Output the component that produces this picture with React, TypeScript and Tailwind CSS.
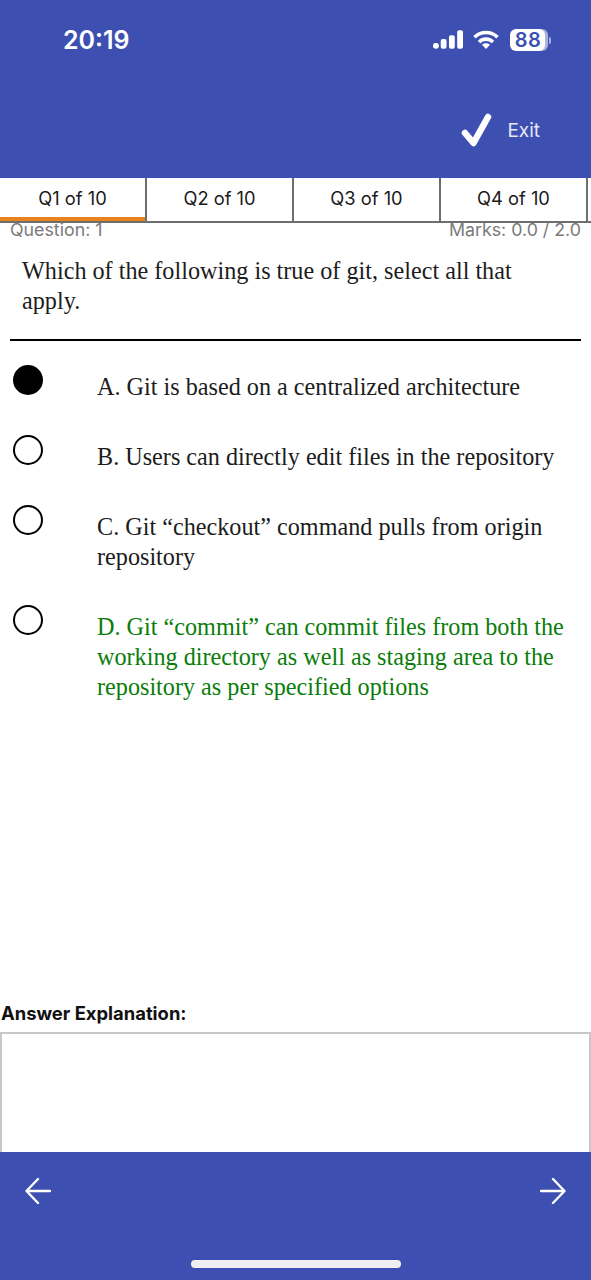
const options = [
  { text: "A. Git is based on a centralized architecture", selected: true, correct: false },
  { text: "B. Users can directly edit files in the repository", selected: false, correct: false },
  { text: "C. Git “checkout” command pulls from origin repository", selected: false, correct: false },
  {
    text: "D. Git “commit” can commit files from both the working directory as well as staging area to the repository as per specified options",
    selected: false,
    correct: true,
  },
]

const tabs = ["Q1 of 10", "Q2 of 10", "Q3 of 10", "Q4 of 10"]

function StatusIcons() {
  return (
    <div className="flex items-center">
      {/* signal */}
      <svg width="30" height="20" viewBox="0 0 31 20" fill="#fff">
        <rect x="0" y="13" width="6" height="6" rx="2.5" />
        <rect x="8" y="9" width="6" height="10" rx="2" />
        <rect x="16.5" y="5" width="6" height="14" rx="2" />
        <rect x="25" y="0" width="6" height="19" rx="2" />
      </svg>
      {/* wifi */}
      <svg className="ml-[10px]" width="26" height="20" viewBox="0 0 26 20" fill="none" stroke="#fff" strokeWidth="3.6">
        <path d="M1.5 7.2C8 1 18 1 24.5 7.2" />
        <path d="M6 12C10 8.2 16 8.2 20 12" />
        <path d="M13 19l-4-4.2c2.3-2 5.700-2 8 0z" fill="#fff" stroke="none" />
      </svg>
      {/* battery */}
      <div className="ml-[11px] flex items-center">
        <div className="relative flex h-[22px] w-[38px] items-center justify-center overflow-hidden rounded-[6px] bg-[#aab2dd]">
          <div className="absolute inset-y-0 left-0 w-[35px] rounded-[6px] bg-white" />
          <span className="relative pr-[2px] text-[20px] leading-none font-semibold tracking-[0.5px] text-[#3d50b2]">88</span>
        </div>
        <div className="ml-[1px] h-[7px] w-[2px] rounded-r-full bg-[#aab2dd]" />
      </div>
    </div>
  )
}

export default function App() {
  return (
    <div className="flex h-[1280px] w-[591px] flex-col overflow-hidden bg-white font-['Inter',sans-serif]">
      {/* header */}
      <header className="h-[178px] bg-[#3d50b2] text-white">
        <div className="flex h-[80px] items-center justify-between pr-[40px] pl-[63px]">
          <span className="text-[25px] leading-none font-semibold">20:19</span>
          <StatusIcons />
        </div>
        <div className="mt-[19px] flex h-[62px] items-center justify-end pr-[51px]">
          <svg width="32" height="34" viewBox="0 0 32 34" fill="none" stroke="#fff" strokeWidth="6.500" strokeLinecap="round" strokeLinejoin="round">
            <path d="M4 20l8.500 10L27 4" />
          </svg>
          <span className="ml-[14px] text-[19px] leading-none text-[#e4e7f6]">Exit</span>
        </div>
      </header>

      {/* question tabs */}
      <div className="flex h-[45px] border-b-2 border-[#6e6e6e] pr-[3px]">
        {tabs.map((tab, i) => (
          <div key={tab} className="relative flex flex-1 items-center justify-center border-r-2 border-[#6e6e6e] pb-[2px] text-[18.3px] text-[#1a1a1a]">
            {tab}
            {i === 0 && <div className="absolute inset-x-0 bottom-0 h-[4px] bg-[#e8831f]" />}
          </div>
        ))}
      </div>

      {/* question meta */}
      <div className="flex h-[14px] items-center justify-between px-[10px] text-[17.8px] leading-none text-[#7a7a7a]">
        <span>Question: 1</span>
        <span>Marks: 0.0 / 2.0</span>
      </div>

      <div className="px-[10px] font-['Liberation_Serif',serif] text-[24.2px] leading-[30px]">
        <p className="mt-[19px] pr-[60px] pl-[12px] text-[#1c1c1c]">
          Which of the following is true of git, select all that apply.
        </p>
        <div className="mt-[23px] h-[2px] bg-black" />
      </div>

      {/* options */}
      <div className="mt-[24px] flex flex-col font-['Liberation_Serif',serif] text-[24.2px] leading-[30px]">
        {options.map((opt) => (
          <div key={opt.text} className="flex items-start pb-[33px] pl-[12.500px]">
            <div className={`h-[30px] w-[30px] shrink-0 rounded-full border-[2.500px] border-black ${opt.selected ? "bg-black" : "bg-white"}`} />
            <p className={`mt-[7px] ml-[54.500px] w-[475px] ${opt.correct ? "text-[#0a7d0a]" : "text-[#1c1c1c]"}`}>{opt.text}</p>
          </div>
        ))}
      </div>

      <div className="flex-1" />

      {/* explanation */}
      <div className="pl-[1px] text-[18.4px] leading-[22px] font-bold text-[#111]">Answer Explanation:</div>
      <div className="mt-[8px] h-[120px] border-2 border-b-0 border-[#c8c8c8] bg-white" />

      {/* footer */}
      <footer className="flex h-[128px] flex-col bg-[#3d50b2]">
        <div className="mt-[25px] flex items-center justify-between px-[25px]">
          <svg width="26" height="28" viewBox="0 0 26 28" fill="none" stroke="#fff" strokeWidth="2.4" strokeLinecap="round" strokeLinejoin="round">
            <path d="M25 14H2M13 2L1.500 14 13 26" />
          </svg>
          <svg width="26" height="28" viewBox="0 0 26 28" fill="none" stroke="#fff" strokeWidth="2.4" strokeLinecap="round" strokeLinejoin="round">
            <path d="M1 14h23M13 2l11.500 12L13 26" />
          </svg>
        </div>
        <div className="mt-auto mb-[12px] h-[8px] w-[210px] self-center rounded-full bg-[#efeff4]" />
      </footer>
    </div>
  )
}
